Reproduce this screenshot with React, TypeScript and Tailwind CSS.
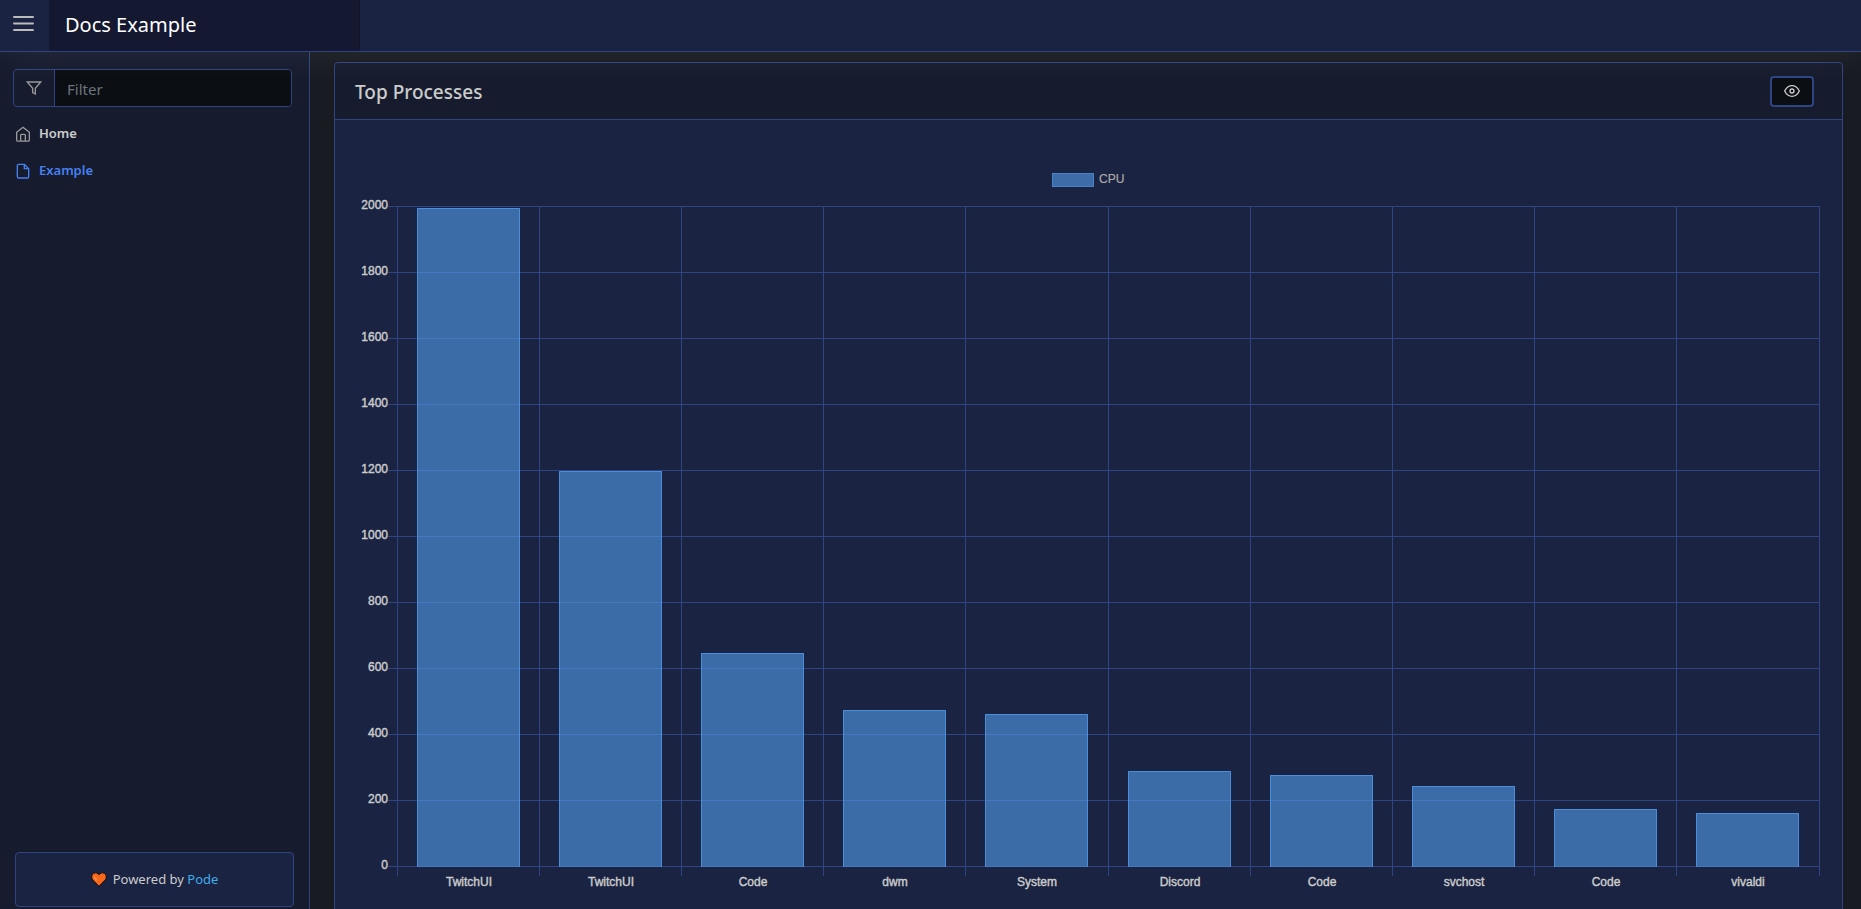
import { useLayoutEffect, useRef, useState } from "react";

const processes = [
  { name: "TwitchUI", cpu: 1995 },
  { name: "TwitchUI", cpu: 1197 },
  { name: "Code", cpu: 644 },
  { name: "dwm", cpu: 474 },
  { name: "System", cpu: 460 },
  { name: "Discord", cpu: 288 },
  { name: "Code", cpu: 275 },
  { name: "svchost", cpu: 242 },
  { name: "Code", cpu: 174 },
  { name: "vivaldi", cpu: 161 },
];

const MAX = 2000;
const STEP = 200;

function BarChart() {
  const ref = useRef<HTMLDivElement>(null);
  const [width, setWidth] = useState(1464);

  useLayoutEffect(() => {
    const el = ref.current;
    if (!el) return;
    const update = () => setWidth(el.clientWidth);
    update();
    const observer = new ResizeObserver(update);
    observer.observe(el);
    return () => observer.disconnect();
  }, []);

  const height = Math.round(width / 2);
  const left = 40;
  const top = 66;
  const right = width;
  const bottom = height - 5;
  const col = (right - left) / processes.length;
  const barWidth = Math.round(col * 0.72);
  const y = (value: number) => Math.round(bottom - (value / MAX) * (bottom - top));
  const ticks = Array.from({ length: MAX / STEP + 1 }, (_, i) => i * STEP);
  const lines = Array.from({ length: processes.length + 1 }, (_, i) => Math.floor(left + i * col));
  const middle = Math.round((left + right) / 2);

  return (
    <div ref={ref}>
      <svg
        width={width}
        height={height + 20}
        className="block overflow-visible font-['Liberation_Sans',sans-serif] text-xs"
        role="img"
        aria-label="CPU usage of the top processes"
      >
        <g stroke="#2f4482" shapeRendering="crispEdges">
          {ticks.map((t) => (
            <line key={t} x1={left - 9} x2={right} y1={y(t) + 0.5} y2={y(t) + 0.5} />
          ))}
          {lines.map((x) => (
            <line key={x} x1={x + 0.5} x2={x + 0.5} y1={top} y2={bottom + 10} />
          ))}
        </g>
        {ticks.map((t) => (
          <text key={t} x={left - 9} y={y(t) + 3} textAnchor="end" fill="#ccc" stroke="#ccc" strokeWidth="0.4">
            {t}
          </text>
        ))}
        {processes.map((p, i) => {
          const center = Math.floor(left + (i + 0.5) * col);
          const x = center - Math.round(barWidth / 2);
          return (
            <g key={i}>
              <rect x={x} y={y(p.cpu)} width={barWidth + 1} height={bottom - y(p.cpu) + 1} fill="#549ded" fillOpacity="0.6" />
              <path
                d={`M${x + 0.5} ${bottom + 1}V${y(p.cpu) + 0.5}H${x + barWidth + 0.5}V${bottom + 1}`}
                fill="none"
                stroke="#4a8fdb"
              />
              <text x={center + 1} y={bottom + 20} textAnchor="middle" fill="#ccc" stroke="#ccc" strokeWidth="0.4">
                {p.name}
              </text>
            </g>
          );
        })}
        <rect x={middle - 55.5} y={33.5} width="41" height="13" fill="#3d6ca8" stroke="#4583ca" />
        <text x={middle - 9} y={43} fill="#aaa" stroke="#aaa" strokeWidth="0.2">
          CPU
        </text>
      </svg>
    </div>
  );
}

function FilterIcon() {
  return (
    <svg viewBox="0 0 24 24" className="size-4" fill="none" stroke="currentColor" strokeWidth="2">
      <path d="M22 3H2l8 9.46V19l4 2v-8.54L22 3z" />
    </svg>
  );
}

function HomeIcon() {
  return (
    <svg viewBox="0 0 24 24" className="size-4" fill="none" stroke="currentColor" strokeWidth="2">
      <path d="M2.500 9.500 12 2l9.500 7.500V21a1.800 1.800 0 0 1-1.800 1.800H4.300A1.800 1.800 0 0 1 2.500 21z" strokeLinejoin="round" />
      <path d="M8.500 22.500v-8.500a1.500 1.500 0 0 1 1.500-1.500h4a1.500 1.500 0 0 1 1.500 1.500v8.500" />
    </svg>
  );
}

function FileIcon() {
  return (
    <svg viewBox="0 0 24 24" className="size-4" fill="none" stroke="currentColor" strokeWidth="2">
      <path d="M14 2H5.500a2 2 0 0 0-2 2v16.500a2 2 0 0 0 2 2h13a2 2 0 0 0 2-2V8.500z" strokeLinejoin="round" />
      <path d="M14 2v6.500h6.500" />
    </svg>
  );
}

function EyeIcon() {
  return (
    <svg viewBox="0 0 24 24" className="size-4" fill="none" stroke="currentColor" strokeWidth="2">
      <path d="M1 12s4-8 11-8 11 8 11 8-4 8-11 8S1 12 1 12z" />
      <circle cx="12" cy="12" r="3" />
    </svg>
  );
}

function HeartIcon() {
  return (
    <svg viewBox="0 0 16 15" className="h-[15px] w-4">
      <path
        d="M8 14.300 1.600 7.800C0 5.800.5 2.500 2.700 1.300 4.800.3 7 1 8 2.900c1-1.900 3.200-2.600 5.300-1.600 2.200 1.200 2.700 4.500 1.100 6.500z"
        fill="#f7681d"
        stroke="#120d0c"
      />
      <path d="M3.200 4.800 6 8.500" stroke="#f99a52" strokeWidth="1.200" />
    </svg>
  );
}

export default function App() {
  return (
    <div className="flex h-screen flex-col overflow-hidden bg-[#181c22] font-['Noto_Sans',sans-serif] text-[#ccc]">
      <header className="z-10 flex h-[52px] shrink-0 border-b border-[#2f4482] bg-[#1a2341] shadow-[0_0_40px_rgba(255,255,255,0.08)]">
        <button type="button" aria-label="Toggle menu" className="flex w-[49px] items-start pt-4 pl-[13px]">
          <svg width="21" height="16" fill="#bbb">
            <rect width="21" height="2" rx="1" />
            <rect y="6.500" width="21" height="2" rx="1" />
            <rect y="13" width="21" height="2" rx="1" />
          </svg>
        </button>
        <div className="flex w-[311px] items-center border-r border-[#111528] bg-[#141830] px-4">
          <a href="#" className="pb-0.5 text-xl text-white">
            Docs Example
          </a>
        </div>
      </header>

      <div className="flex min-h-0 flex-1">
        <nav className="flex w-[310px] shrink-0 flex-col border-r border-[#2f4482] bg-[#161c2e]">
          <div className="mt-[17px] mr-[17px] ml-[13px] flex h-[38px] overflow-hidden rounded border border-[#2f4482]">
            <label htmlFor="filter" aria-label="Filter" className="flex w-[41px] items-center justify-center border-r border-[#2f4482] text-[#999]">
              <FilterIcon />
            </label>
            <input
              id="filter"
              type="text"
              placeholder="Filter"
              className="min-w-0 flex-1 bg-[#0b0e13] px-3 pt-0.5 text-[15px] outline-none placeholder:text-[#6c757d]"
            />
          </div>
          <ul className="mt-2 text-[13px] font-semibold">
            <li>
              <a href="#" className="flex h-[37px] items-center gap-2 px-[15px]">
                <span className="text-[#999]">
                  <HomeIcon />
                </span>
                Home
              </a>
            </li>
            <li>
              <a href="#" className="flex h-[37px] items-center gap-2 px-[15px] text-[#4680f0]">
                <FileIcon />
                Example
              </a>
            </li>
          </ul>
          <footer className="mt-auto mr-[15px] mb-[2px] ml-[15px] flex h-[55px] items-center justify-center gap-1.5 rounded border border-[#2f4482] bg-[#1a2341] text-[13px]">
            <HeartIcon />
            <p>
              Powered by{" "}
              <a href="#" className="text-[#41adec]">
                Pode
              </a>
            </p>
          </footer>
        </nav>

        <main className="min-w-0 flex-1 overflow-hidden pt-[10px] pr-[18px] pl-6">
          <section className="rounded border border-[#2f4482] bg-[#1a2341]">
            <div className="flex h-[57px] items-center justify-between rounded-t border-b border-[#2f4482] bg-[#161c2e] pr-7 pl-5">
              <h5 className="pt-0.5 text-[19px] font-medium">Top Processes</h5>
              <button
                type="button"
                aria-label="Show or hide"
                className="flex h-[31px] w-11 items-center justify-center rounded border-2 border-[#2f4482] bg-[#0b0e13]"
              >
                <EyeIcon />
              </button>
            </div>
            <div className="pt-5 pr-[23px] pb-5 pl-[22px]">
              <BarChart />
            </div>
          </section>
        </main>
      </div>
    </div>
  );
}
